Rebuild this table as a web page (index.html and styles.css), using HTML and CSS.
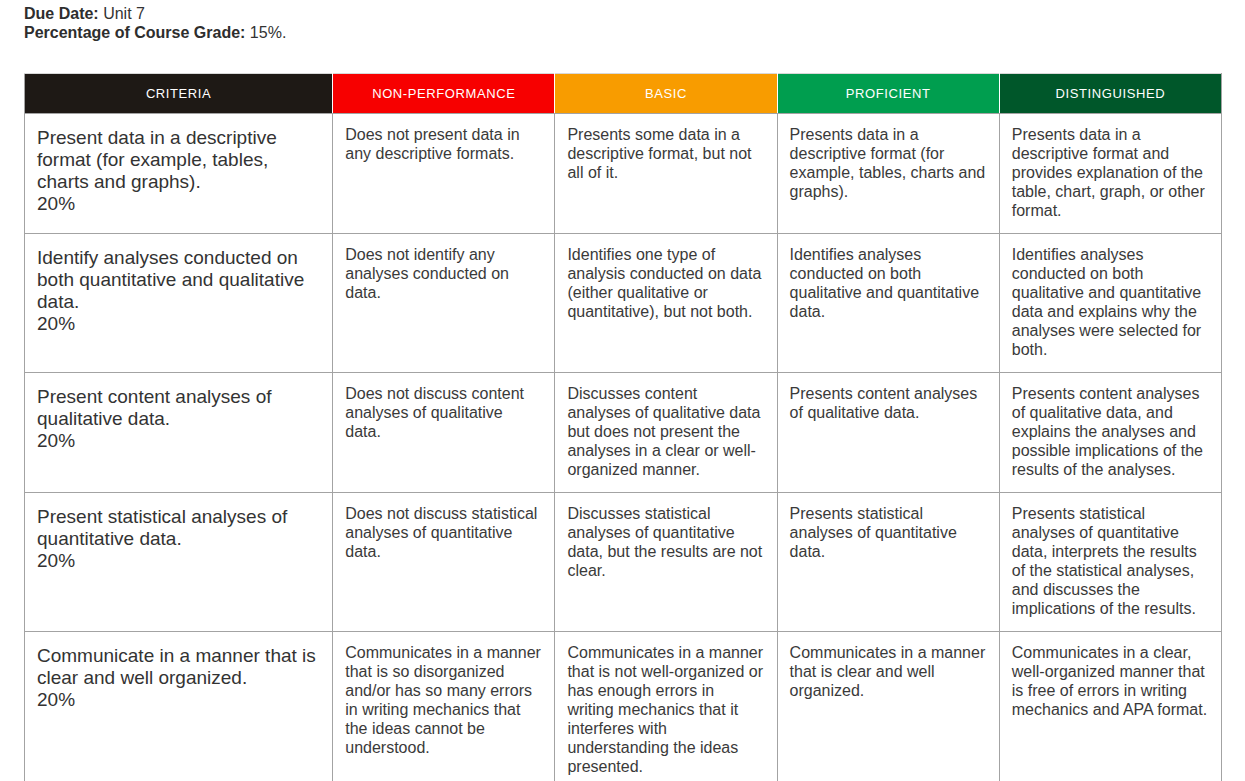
FILE: index.html
```html
<!DOCTYPE html>
<html>
<head>
<meta charset="utf-8">
<link rel="stylesheet" href="styles.css">
</head>
<body>
<div class="page">
  <div class="meta">
    <div><b>Due Date:</b> Unit 7</div>
    <div><b>Percentage of Course Grade:</b> 15%.</div>
  </div>
  <table class="rubric">
    <colgroup>
      <col class="c-crit"><col class="c-lvl"><col class="c-lvl"><col class="c-lvl"><col class="c-lvl">
    </colgroup>
    <thead>
      <tr>
        <th class="h-crit">Criteria</th>
        <th class="h-non">Non-performance</th>
        <th class="h-basic">Basic</th>
        <th class="h-prof">Proficient</th>
        <th class="h-dist">Distinguished</th>
      </tr>
    </thead>
    <tbody>
      <tr>
        <td class="crit">Present data in a descriptive format (for example, tables, charts and graphs).<br>20%</td>
        <td>Does not present data in any descriptive formats.</td>
        <td>Presents some data in a descriptive format, but not all of it.</td>
        <td>Presents data in a descriptive format (for example, tables, charts and graphs).</td>
        <td>Presents data in a descriptive format and provides explanation of the table, chart, graph, or other format.</td>
      </tr>
      <tr>
        <td class="crit">Identify analyses conducted on both quantitative and qualitative data.<br>20%</td>
        <td>Does not identify any analyses conducted on data.</td>
        <td>Identifies one type of analysis conducted on data (either qualitative or quantitative), but not both.</td>
        <td>Identifies analyses conducted on both qualitative and quantitative data.</td>
        <td>Identifies analyses conducted on both qualitative and quantitative data and explains why the analyses were selected for both.</td>
      </tr>
      <tr>
        <td class="crit">Present content analyses of qualitative data.<br>20%</td>
        <td>Does not discuss content analyses of qualitative data.</td>
        <td>Discusses content analyses of qualitative data but does not present the analyses in a clear or well-organized manner.</td>
        <td>Presents content analyses of qualitative data.</td>
        <td>Presents content analyses of qualitative data, and explains the analyses and possible implications of the results of the analyses.</td>
      </tr>
      <tr>
        <td class="crit">Present statistical analyses of quantitative data.<br>20%</td>
        <td>Does not discuss statistical analyses of quantitative data.</td>
        <td>Discusses statistical analyses of quantitative data, but the results are not clear.</td>
        <td>Presents statistical analyses of quantitative data.</td>
        <td>Presents statistical analyses of quantitative data, interprets the results of the statistical analyses, and discusses the implications of the results.</td>
      </tr>
      <tr>
        <td class="crit">Communicate in a manner that is clear and well organized.<br>20%</td>
        <td>Communicates in a manner that is so disorganized and/or has so many errors in writing mechanics that the ideas cannot be understood.</td>
        <td>Communicates in a manner that is not well-organized or has enough errors in writing mechanics that it interferes with understanding the ideas presented.</td>
        <td>Communicates in a manner that is clear and well organized.</td>
        <td>Communicates in a clear, well-organized manner that is free of errors in writing mechanics and APA format.</td>
      </tr>
    </tbody>
  </table>
</div>
</body>
</html>
```

FILE: styles.css
```css
html, body {
  margin: 0;
  padding: 0;
  background: #fff;
}
body {
  font-family: "Liberation Sans", Arial, Helvetica, sans-serif;
  color: #333;
}
.page {
  padding: 4px 24px 0 24px;
}
.meta {
  font-size: 16px;
  line-height: 19px;
  color: #333;
}
.meta b {
  font-weight: bold;
  color: #2e2e2e;
}
.rubric {
  margin-top: 31px;
  width: 1198px;
  table-layout: fixed;
  border-collapse: collapse;
  border: 1px solid #a3a3a3;
}
.c-crit { width: 308px; }
.c-lvl { width: 222px; }
.rubric th {
  height: 39px;
  padding: 0 8px;
  font-size: 13px;
  font-weight: normal;
  letter-spacing: 0.6px;
  text-transform: uppercase;
  color: #fff;
  text-align: center;
  vertical-align: middle;
  border-top: 1px solid #d8d8d8;
  border-left: 1px solid #fff;
  border-right: 1px solid #fff;
  border-bottom: 1px solid #a3a3a3;
}
.rubric th.h-crit { border-left: 1px solid #a3a3a3; }
.rubric th.h-dist { border-right: 1px solid #a3a3a3; }
.h-crit { background: #1e1915; }
.h-non { background: #f70000; }
.h-basic { background: #f89c00; }
.h-prof { background: #009e4f; }
.h-dist { background: #00572a; }
.rubric td {
  vertical-align: top;
  padding: 11px 12px 13px 12px;
  font-size: 16px;
  line-height: 19px;
  color: #3a3a3a;
  border: 1px solid #a3a3a3;
}
.rubric td.crit {
  font-size: 19px;
  line-height: 22px;
  padding-top: 13px;
  color: #333;
}
```
